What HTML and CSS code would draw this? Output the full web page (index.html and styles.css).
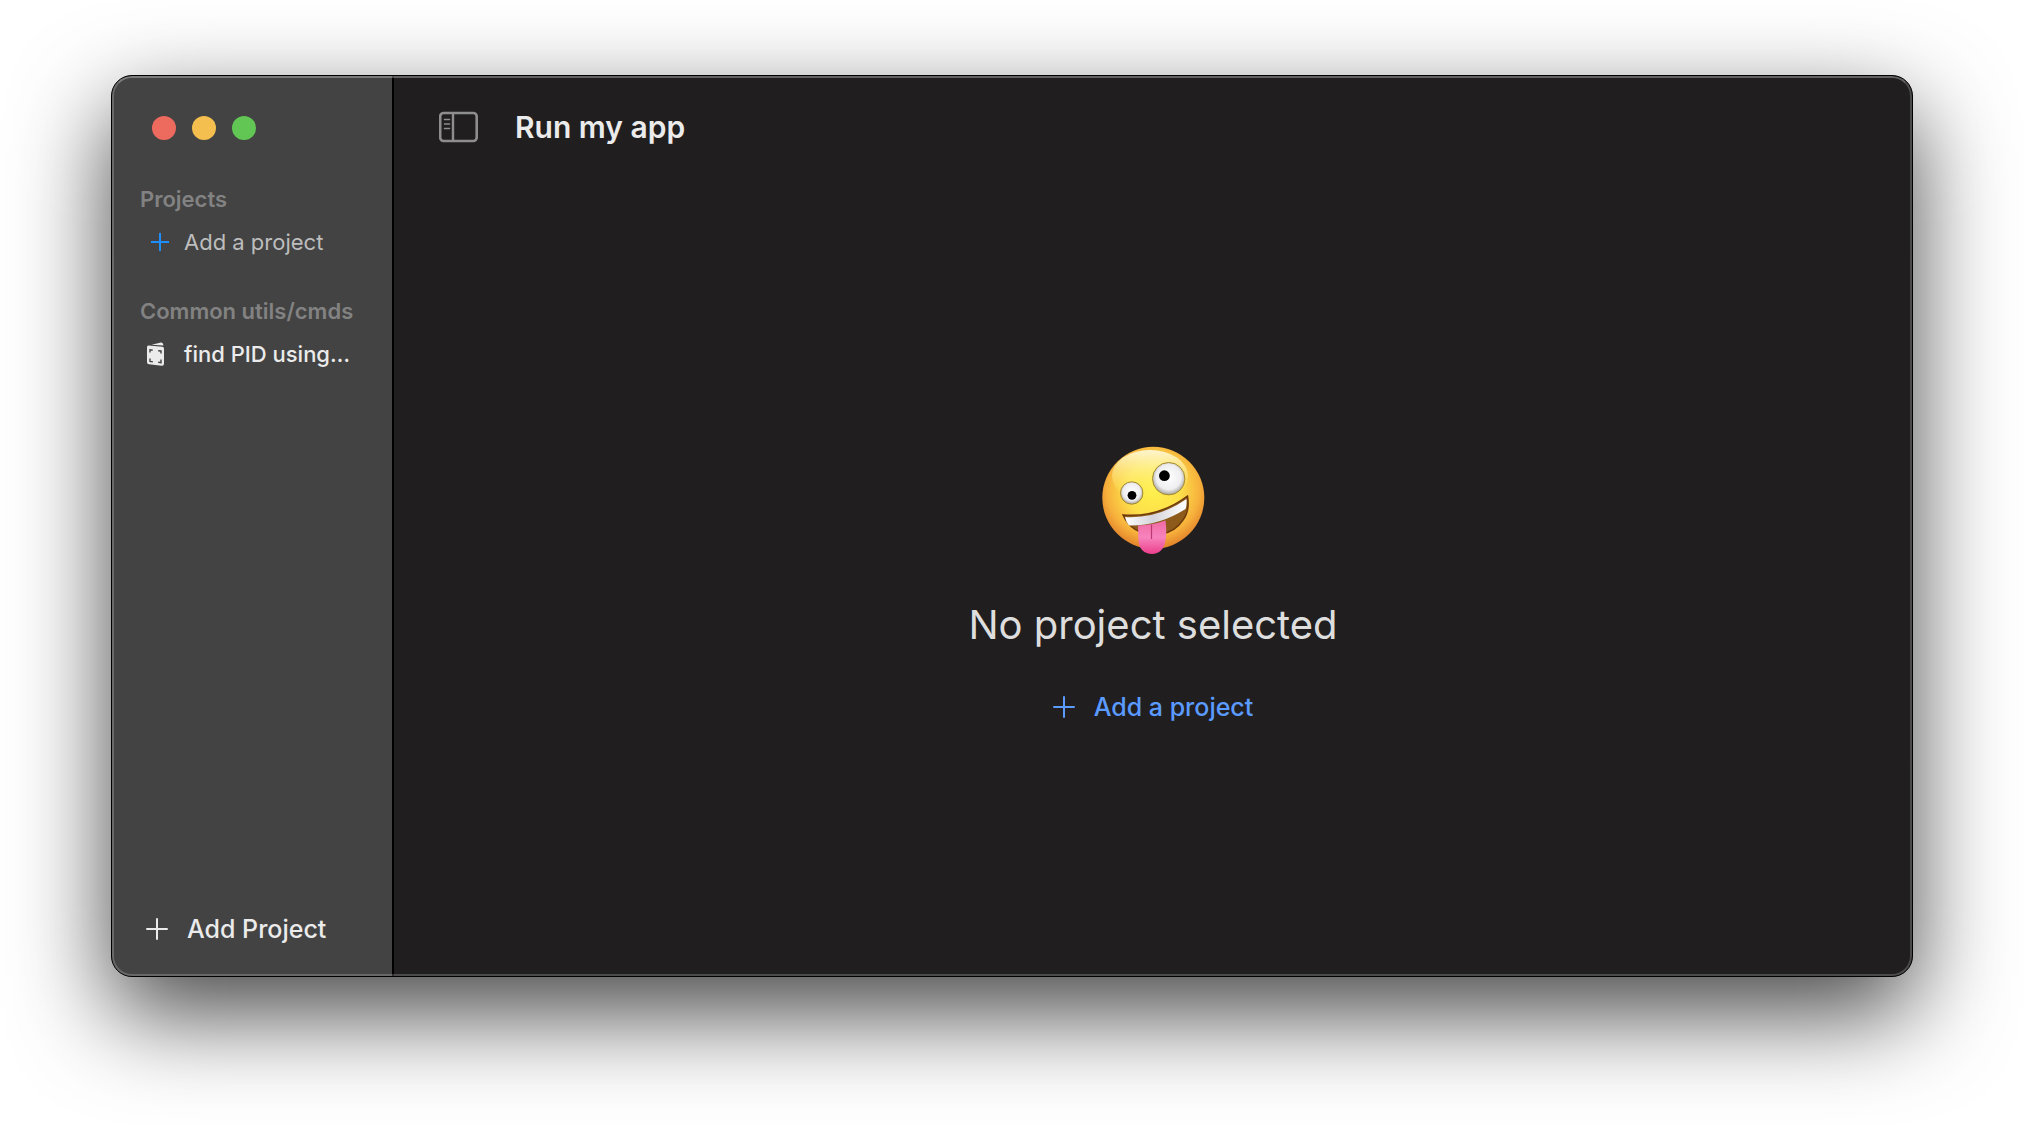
FILE: index.html
```html
<!DOCTYPE html>
<html lang="en">
<head>
<meta charset="utf-8">
<title>Run my app</title>
<link rel="stylesheet" href="styles.css">
</head>
<body>
<div class="window">
  <aside class="sidebar">
    <div class="lights">
      <button class="light close" aria-label="Close"></button>
      <button class="light minimise" aria-label="Minimise"></button>
      <button class="light zoom" aria-label="Zoom"></button>
    </div>
    <nav class="nav">
      <section class="group">
        <h2 class="group-title">Projects</h2>
        <button class="item item-muted">
          <svg class="item-icon accent" viewBox="0 0 24 24" aria-hidden="true"><path d="M15 3v18M6 12h18" stroke="currentColor" stroke-width="2"/></svg>
          <span>Add a project</span>
        </button>
      </section>
      <section class="group">
        <h2 class="group-title">Common utils/cmds</h2>
        <button class="item">
          <svg class="item-icon" viewBox="0 0 24 24" aria-hidden="true">
            <path d="M6.500 2.800 16 .4Q18 .2 18.400 3.600Z" fill="currentColor"/>
            <path d="M3.600 3.400 17.300 4.800Q19 5 19 6.700V21.500Q19 24 16.800 23.700L4 22.300Q2 22 2 20.200V5.200Q2 3.200 3.600 3.400Z" fill="currentColor"/>
            <path d="M5 10.500V7.800L7.800 8.100M13.200 8.700 16 9V11.500M5 16.500V19.400L7.800 19.700M13.200 20.300 16 20.600V17.600" fill="none" stroke="#434343" stroke-width="1.400"/>
          </svg>
          <span>find PID using…</span>
        </button>
      </section>
    </nav>
    <button class="add-project">
      <svg class="plus" viewBox="0 0 22 22" aria-hidden="true"><path d="M11 1v20M1 11h20" stroke="currentColor" stroke-width="2" stroke-linecap="round"/></svg>
      <span>Add Project</span>
    </button>
  </aside>
  <main class="main">
    <header class="toolbar">
      <button class="toggle" aria-label="Toggle sidebar">
        <svg class="toggle-icon" viewBox="0 0 40 32" aria-hidden="true">
          <rect x="1.200" y="2" width="36.500" height="28" rx="3.500" fill="none" stroke="currentColor" stroke-width="2.600"/>
          <path d="M14 2v28" stroke="currentColor" stroke-width="2.400"/>
          <path d="M5.500 8.500h5M5.500 13h5M5.500 17.500h5" stroke="currentColor" stroke-width="1.600" stroke-linecap="round"/>
        </svg>
      </button>
      <h1 class="title">Run my app</h1>
    </header>
    <div class="empty">
      <svg class="emoji" viewBox="20 15 104 110" role="img" aria-label="Zany face">
        <defs>
          <radialGradient id="face" cx="0.500" cy="0.420" r="0.580">
            <stop offset="0" stop-color="#fff04a"/><stop offset="0.450" stop-color="#fde04a"/><stop offset="0.780" stop-color="#f7b23c"/><stop offset="1" stop-color="#e2832b"/>
          </radialGradient>
          <linearGradient id="shine" x1="0" y1="0" x2="0" y2="1">
            <stop offset="0" stop-color="#fffbe0" stop-opacity="0.900"/><stop offset="1" stop-color="#fff04a" stop-opacity="0"/>
          </linearGradient>
          <radialGradient id="eye" cx="0.500" cy="0.450" r="0.550">
            <stop offset="0" stop-color="#fff"/><stop offset="0.700" stop-color="#eeeef0"/><stop offset="1" stop-color="#a3a19a"/>
          </radialGradient>
          <linearGradient id="teeth" x1="0" y1="0" x2="1" y2="0">
            <stop offset="0" stop-color="#fff"/><stop offset="0.450" stop-color="#d4d4da"/><stop offset="1" stop-color="#fff"/>
          </linearGradient>
          <linearGradient id="tongue" x1="0" y1="0" x2="0" y2="1">
            <stop offset="0" stop-color="#f06aa4"/><stop offset="0.500" stop-color="#f783bd"/><stop offset="1" stop-color="#ec3f8b"/>
          </linearGradient>
        </defs>
        <circle cx="72.300" cy="66.800" r="51" fill="url(#face)"/>
        <ellipse cx="69" cy="45" rx="38" ry="26" fill="url(#shine)"/>
        <circle cx="50.700" cy="62" r="11.200" fill="url(#eye)" stroke="#a88b26" stroke-width="1"/>
        <circle cx="51" cy="64.300" r="4.400" fill="#000"/>
        <circle cx="87.700" cy="47.700" r="16.200" fill="url(#eye)" stroke="#a88b26" stroke-width="1"/>
        <circle cx="83.400" cy="44.700" r="5.400" fill="#000"/>
        <path d="M42 84Q77 87 106.500 65Q109 80 102 89Q94 101 80 103Q52 106 42 84Z" fill="#8d5a1c" stroke="#6d3a0a" stroke-width="1.500"/>
        <path d="M44 86Q77 88 105.500 68Q106 75 104.500 78Q78 95 48 94.500Q45 91 44 86Z" fill="url(#teeth)"/>
        <path d="M57 94.500Q72 94 84.500 89.500Q86 101 84.500 110Q82 122.500 71 123Q59 122.500 57.500 110Z" fill="url(#tongue)"/>
        <path d="M70.500 93.500V108" stroke="#bd3771" stroke-width="1.200"/>
      </svg>
      <p class="message">No project selected</p>
      <button class="add-link">
        <svg class="plus" viewBox="0 0 22 22" aria-hidden="true"><path d="M11 1v20M1 11h20" stroke="currentColor" stroke-width="2" stroke-linecap="round"/></svg>
        <span>Add a project</span>
      </button>
    </div>
  </main>
</div>
</body>
</html>
```

FILE: styles.css
```css
* { box-sizing: border-box; }

body {
  display: flex;
  min-height: 100vh;
  margin: 0;
  padding: 75px 111px 147px;
  background: #fff;
  font-family: Inter, "Liberation Sans", sans-serif;
  color: #ebebeb;
}

button {
  margin: 0;
  padding: 0;
  border: 0;
  background: none;
  color: inherit;
  font: inherit;
  text-align: left;
}

svg { display: block; flex: none; }

.window {
  position: relative;
  display: flex;
  flex: 1;
  overflow: hidden;
  border: 1px solid #000;
  border-radius: 21px;
  background: #201e1f;
  box-shadow: 0 36px 96px rgba(0, 0, 0, 0.73);
}

/* Light rim drawn over both panes */
.window::after {
  content: "";
  position: absolute;
  inset: 0;
  border: 2px solid rgba(255, 255, 255, 0.2);
  border-top-color: rgba(255, 255, 255, 0.3);
  border-radius: 20px;
  pointer-events: none;
}

.sidebar {
  display: flex;
  flex: none;
  flex-direction: column;
  width: 282px;
  padding: 40px 0 31px 28px;
  border-right: 2px solid #000;
  background: #434343;
}

.lights {
  display: flex;
  gap: 16px;
  padding-left: 12px;
}

.light {
  width: 24px;
  height: 24px;
  border-radius: 50%;
}

.close { background: #ed6a5f; }
.minimise { background: #f5bf4f; }
.zoom { background: #62c655; }

.nav {
  display: flex;
  flex: 1;
  flex-direction: column;
  gap: 39px;
  margin-top: 45px;
}

.group-title {
  margin: 0;
  font-size: 22px;
  font-weight: 600;
  line-height: 28px;
  color: #828282;
}

.item {
  display: flex;
  align-items: center;
  gap: 15px;
  margin-top: 13px;
  padding-left: 5px;
  font-size: 22px;
  font-weight: 500;
  line-height: 32px;
  white-space: nowrap;
}

.item-muted {
  font-weight: 400;
  color: #bdbdbd;
}

.item-icon {
  width: 24px;
  height: 24px;
}

.accent { color: #1e8dff; }

.add-project,
.add-link {
  display: flex;
  align-items: center;
  gap: 19px;
  font-size: 25px;
  font-weight: 500;
  line-height: 32px;
}

.add-project { padding-left: 6px; }

.plus {
  width: 22px;
  height: 22px;
}

.main {
  display: flex;
  flex: 1;
  flex-direction: column;
}

.toolbar {
  display: flex;
  align-items: center;
  gap: 36px;
  height: 102px;
  padding-left: 45px;
}

.toggle { color: #8f8e8f; }

.toggle-icon {
  width: 40px;
  height: 32px;
}

.title {
  margin: 0;
  font-size: 30px;
  font-weight: 600;
  line-height: 36px;
}

.empty {
  display: flex;
  flex: 1;
  flex-direction: column;
  align-items: center;
  justify-content: center;
  padding-top: 14px;
}

.emoji {
  width: 104px;
  height: 110px;
}

.message {
  margin: 43px 0 40px;
  font-size: 40px;
  line-height: 52px;
  color: #dedede;
}

.add-link { color: #5b9bff; }
```
